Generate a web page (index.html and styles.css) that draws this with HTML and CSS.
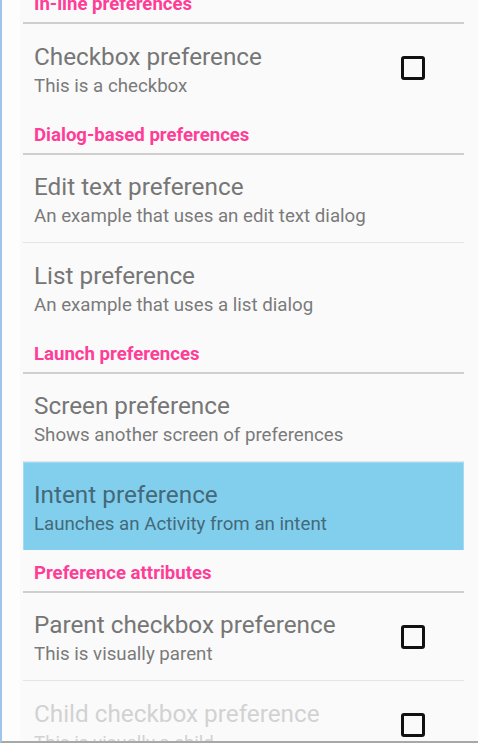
FILE: index.html
```html
<!DOCTYPE html>
<html>
<head>
<meta charset="utf-8">
<link rel="stylesheet" href="styles.css">
</head>
<body>
<div class="window">
  <div class="list">
    <div class="header">In-line preferences</div>
    <div class="row last">
      <div class="texts">
        <div class="title">Checkbox preference</div>
        <div class="summary">This is a checkbox</div>
      </div>
      <div class="check"></div>
    </div>

    <div class="header">Dialog-based preferences</div>
    <div class="row">
      <div class="texts">
        <div class="title">Edit text preference</div>
        <div class="summary">An example that uses an edit text dialog</div>
      </div>
    </div>
    <div class="row last">
      <div class="texts">
        <div class="title">List preference</div>
        <div class="summary">An example that uses a list dialog</div>
      </div>
    </div>

    <div class="header">Launch preferences</div>
    <div class="row">
      <div class="texts">
        <div class="title">Screen preference</div>
        <div class="summary">Shows another screen of preferences</div>
      </div>
    </div>
    <div class="row last selected">
      <div class="texts">
        <div class="title">Intent preference</div>
        <div class="summary">Launches an Activity from an intent</div>
      </div>
    </div>

    <div class="header">Preference attributes</div>
    <div class="row">
      <div class="texts">
        <div class="title">Parent checkbox preference</div>
        <div class="summary">This is visually parent</div>
      </div>
      <div class="check"></div>
    </div>
    <div class="row last disabled">
      <div class="texts">
        <div class="title">Child checkbox preference</div>
        <div class="summary">This is visually a child</div>
      </div>
      <div class="check"></div>
    </div>
  </div>
</div>
</body>
</html>
```

FILE: styles.css
```css
html, body {
  margin: 0;
  padding: 0;
  background: #fafafa;
}

.window {
  height: 741px;
  overflow: hidden;
  border-left: 2px solid #9fc6ea;
  border-bottom: 2px solid #a8a8a8;
  background: linear-gradient(to right, #fdfdfd 0, #fdfdfd 18px, #fafafa 18px);
  font-family: Roboto, "Noto Sans", sans-serif;
}

.list {
  margin-top: -19px;
  margin-left: 21px;
  width: 441px;
}

.header {
  height: 37px;
  padding-top: 4px;
  border-bottom: 2px solid #cfcfcf;
  box-sizing: content-box;
  padding-left: 11px;
  font-size: 18.6px;
  font-weight: bold;
  color: #ff3d97;
  display: flex;
  align-items: center;
}

.row {
  height: 84px;
  padding-top: 3px;
  border-bottom: 1px solid #e4e4e4;
  display: flex;
  align-items: center;
  padding-left: 11px;
  padding-right: 39px;
}

.row.last {
  border-bottom: none;
  height: 85px;
}

.texts {
  flex: 1;
  display: flex;
  flex-direction: column;
  gap: 4px;
}

.title {
  font-size: 24.3px;
  color: #767676;
  line-height: 28px;
}

.summary {
  font-size: 18.7px;
  color: #7a7a7a;
  line-height: 22px;
}

.check {
  width: 18px;
  height: 18px;
  border: 3px solid #111;
  border-radius: 3px;
  background: #fafafa;
  margin-top: -3px;
}

.selected {
  background: #82cfed;
  box-shadow: inset 1px 0 0 #a3dcf2, inset -1px 0 0 #a3dcf2, inset 0 1px 0 #a3dcf2;
}

.selected .title,
.selected .summary {
  color: #43697a;
}

.disabled .title,
.disabled .summary {
  color: #d2d2d2;
}
```
